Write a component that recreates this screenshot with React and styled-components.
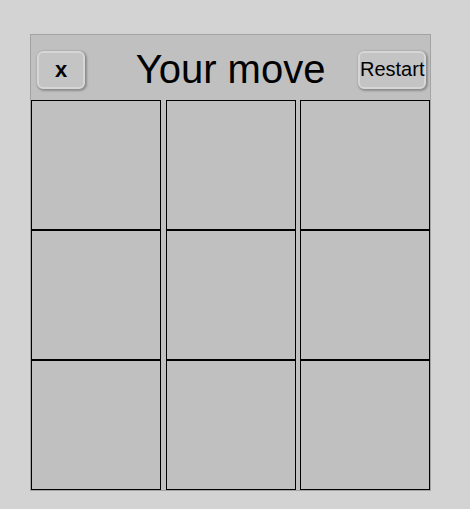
import React, { useState } from 'react'
import styled, { createGlobalStyle } from 'styled-components'

const GlobalStyle = createGlobalStyle`
    body {
        margin: 0;
        padding: 34px 0 0 30px;
        background-color: #d3d3d3;
        font-family: "Liberation Sans", Arial, sans-serif;
    }
`

const Board = styled.div`
    width: 399px;
    border: 1px solid #a3a3a3;
    background-color: #c0c0c0;
`

const Header = styled.div`
    height: 65px;
    display: grid;
    grid-template-columns: 1fr auto 1fr;
    align-items: center;
    padding: 0 4px 0 6px;
`

const Title = styled.h1`
    margin: 0;
    font-size: 40px;
    font-weight: 400;
    color: #000;
    line-height: 1;
    position: relative;
    top: 1px;
    left: -1px;
`

const Button = styled.button`
    box-sizing: border-box;
    justify-self: ${props => props.$end ? 'end' : 'start'};
    height: 38px;
    width: ${props => props.$end ? '68px' : '48px'};
    margin-top: 4px;
    padding: 0;
    border: 2px solid #d6d6d6;
    border-radius: 6px;
    background-color: #c4c4c4;
    box-shadow: 1px 1px 2px 1px #8e8e8e;
    font-family: "Liberation Sans", Arial, sans-serif;
    font-size: ${props => props.$bold ? '22px' : '20px'};
    font-weight: ${props => props.$bold ? 700 : 400};
    color: #000;
    cursor: pointer;
    outline: none;
`

const Grid = styled.div`
    display: grid;
    grid-template-columns: repeat(3, 130px);
    grid-auto-rows: 130px;
    column-gap: 4.5px;
`

const Cell = styled.div`
    box-sizing: border-box;
    border: 1px solid #000;
    background-color: #c0c0c0;
    display: flex;
    align-items: center;
    justify-content: center;
    font-size: 80px;
`

const App = () => {
    const [cells, setCells] = useState(Array(9).fill(''))

    return (
        <>
        <GlobalStyle />
        <Board>
            <Header>
                <Button $bold>x</Button>
                <Title>Your move</Title>
                <Button $end onClick={() => setCells(Array(9).fill(''))}>Restart</Button>
            </Header>
            <Grid>
                {cells.map((c, i) => (
                    <Cell key={i}>{c}</Cell>
                ))}
            </Grid>
        </Board>
        </>
    )
}

export default App
